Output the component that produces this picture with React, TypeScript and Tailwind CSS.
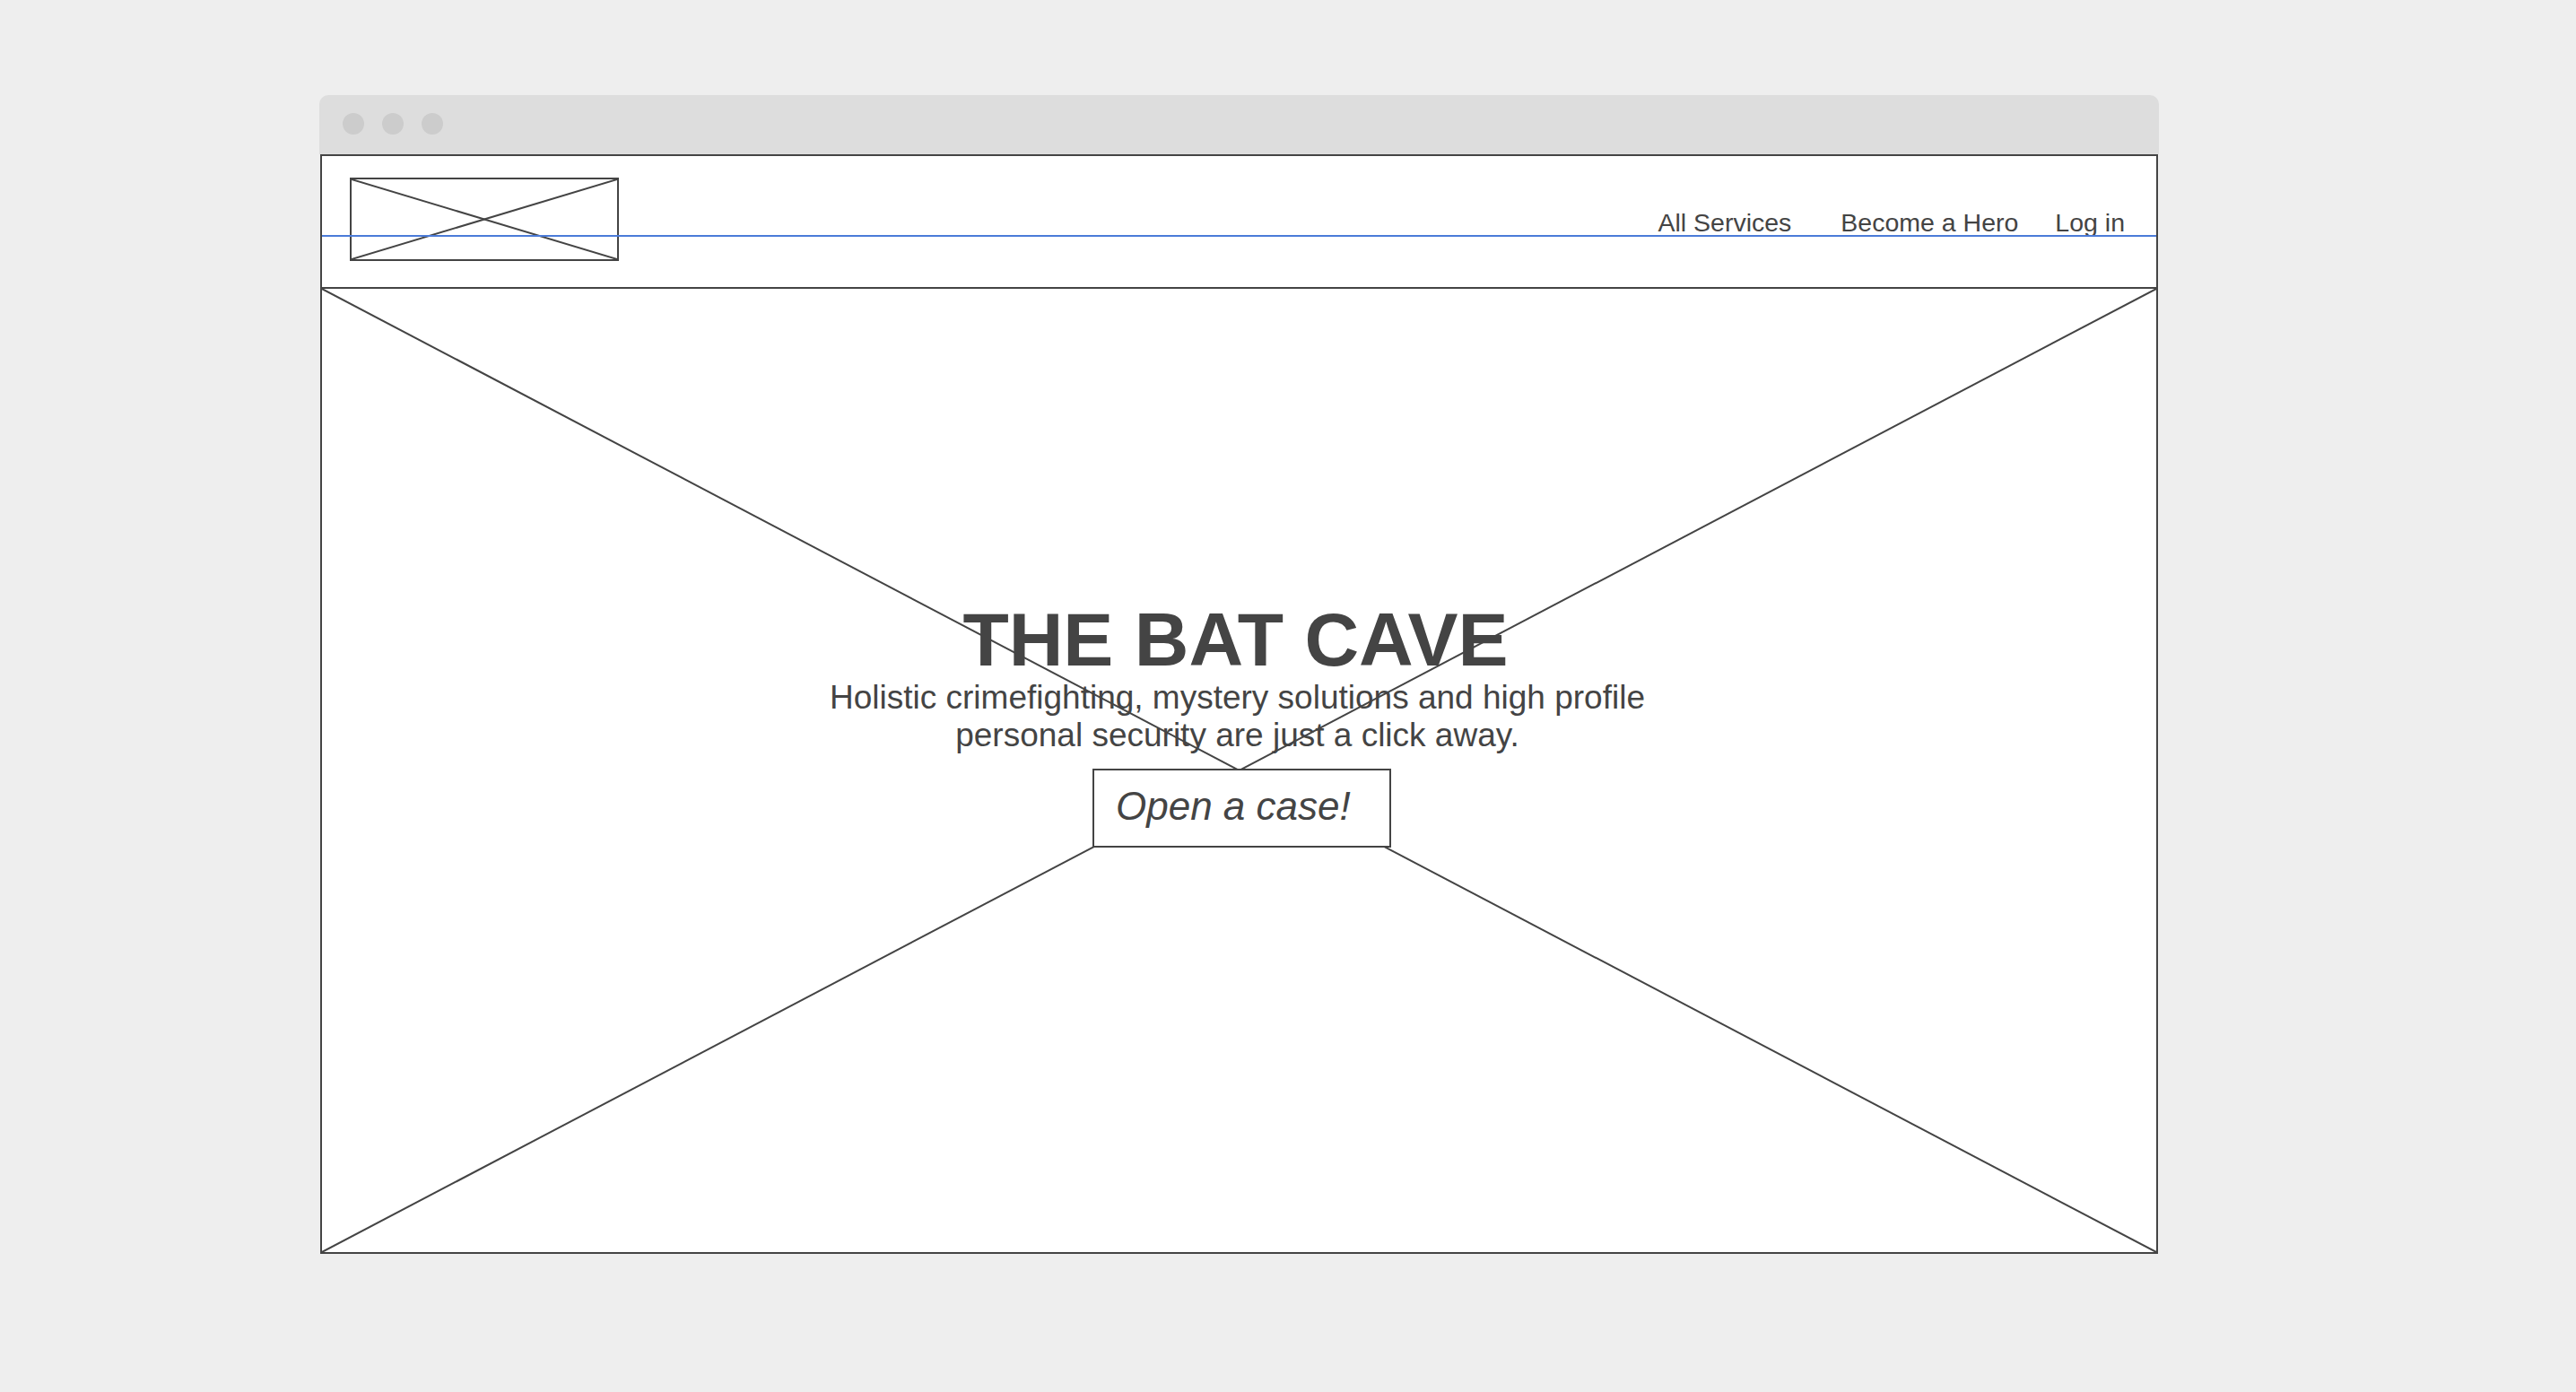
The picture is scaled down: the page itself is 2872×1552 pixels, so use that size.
import React from 'react'

function CrossBox({ className = '' }: { className?: string }) {
  return (
    <svg className={className} preserveAspectRatio="none" viewBox="0 0 100 100">
      <line x1="0" y1="0" x2="100" y2="100" stroke="#444" strokeWidth="2" vectorEffect="non-scaling-stroke" />
      <line x1="100" y1="0" x2="0" y2="100" stroke="#444" strokeWidth="2" vectorEffect="non-scaling-stroke" />
    </svg>
  )
}

function WindowChrome() {
  return (
    <div className="flex h-[66px] items-start gap-[20px] rounded-t-[10px] bg-[#dddddd] pl-[26px] pt-[20px]">
      <span className="h-[24px] w-[24px] rounded-full bg-[#cccccc]" />
      <span className="h-[24px] w-[24px] rounded-full bg-[#cccccc]" />
      <span className="h-[24px] w-[24px] rounded-full bg-[#cccccc]" />
    </div>
  )
}

function Header() {
  return (
    <header className="relative flex h-[148px] items-start justify-between border-b-2 border-[#444]">
      <div className="relative ml-[31px] mt-[24px] h-[93px] w-[300px] border-2 border-[#444]">
        <CrossBox className="absolute inset-0 h-full w-full" />
      </div>
      <nav className="flex pr-[35px] pt-[58px] text-[28.5px] leading-[33px] text-[#444]">
        <a className="mr-[55px]">All Services</a>
        <a className="mr-[41px]">Become a Hero</a>
        <a>Log in</a>
      </nav>
      <div className="absolute left-0 right-0 top-[88px] h-[2px] bg-[#4b7bd8]" />
    </header>
  )
}

function Hero() {
  return (
    <section className="relative h-[1074px]">
      <CrossBox className="absolute inset-0 h-full w-full" />
      <div className="relative flex flex-col items-center pt-[348px] text-[#444]">
        <h1 className="pr-[8px] text-[84px] font-bold leading-[87px]">THE BAT CAVE</h1>
        <p className="max-w-[980px] pr-[4px] text-center text-[37px] leading-[42px]">
          Holistic crimefighting, mystery solutions and high profile personal security are just a click away.
        </p>
        <button className="ml-[6px] mt-[16px] h-[88px] w-[333px] border-2 border-[#444] bg-white pb-[4px] pl-[24px] text-left text-[44px] italic leading-[50px] text-[#444]">
          Open a case!
        </button>
      </div>
    </section>
  )
}

export default function App() {
  return (
    <div className="min-h-[1552px] bg-[#eeeeee] pl-[356px] pt-[106px]" style={{ fontFamily: '"Liberation Sans", Arial, sans-serif' }}>
      <div className="w-[2051px]">
        <WindowChrome />
        <main className="mx-px border-2 border-[#444] bg-white">
          <Header />
          <Hero />
        </main>
      </div>
    </div>
  )
}
